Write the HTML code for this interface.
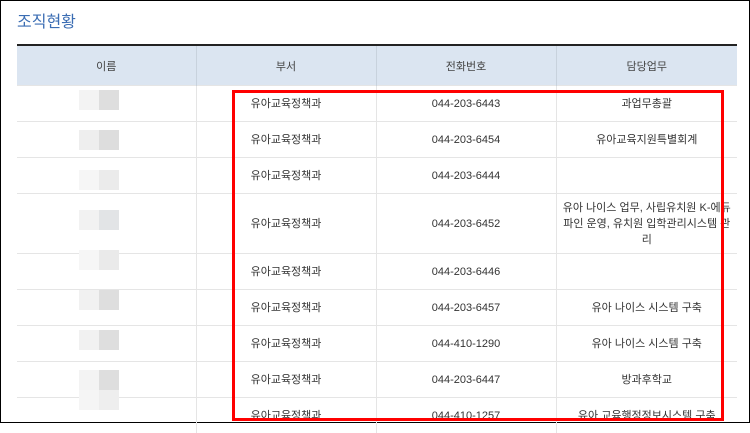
<!DOCTYPE html>
<html><head><meta charset="utf-8"><style>
body{margin:0;width:750px;height:423px;overflow:hidden;background:#fff;font-family:"Liberation Sans","Noto Sans CJK KR",sans-serif;position:relative}
.frame{position:absolute;left:0;top:0;width:748px;height:421px;border:1px solid #000;}
.title{position:absolute;left:17px;top:8px;font-size:16px;color:#3b6db3;}
table{position:absolute;left:17px;top:44px;width:720px;border-collapse:collapse;border-top:2px solid #222;font-size:11px;color:#333;table-layout:fixed}
th{background:#dbe5f1;height:37px;font-weight:normal;border-left:1px solid #c8d2dd;color:#444}
th:first-child,td:first-child{border-left:none}
td{text-align:center;border-top:1px solid #e5e5e5;border-left:1px solid #e5e5e5;height:35px;padding:0 4px;line-height:16px}
.b{position:absolute;width:20px;height:20px}
.red{position:absolute;left:232px;top:90px;width:486px;height:325px;border:3px solid #f00}
</style></head><body>
<div class="frame"></div>
<div class="title">조직현황</div>
<table>
<colgroup><col style="width:179px"><col style="width:180px"><col style="width:180px"><col style="width:181px"></colgroup>
<tr><th>이름</th><th>부서</th><th>전화번호</th><th>담당업무</th></tr>
<tr><td></td><td>유아교육정책과</td><td>044-203-6443</td><td>과업무총괄</td></tr>
<tr><td></td><td>유아교육정책과</td><td>044-203-6454</td><td>유아교육지원특별회계</td></tr>
<tr><td></td><td>유아교육정책과</td><td>044-203-6444</td><td></td></tr>
<tr><td style="height:59px"></td><td>유아교육정책과</td><td>044-203-6452</td><td>유아 나이스 업무, 사립유치원 K-에듀파인 운영, 유치원 입학관리시스템 관리</td></tr>
<tr><td></td><td>유아교육정책과</td><td>044-203-6446</td><td></td></tr>
<tr><td></td><td>유아교육정책과</td><td>044-203-6457</td><td>유아 나이스 시스템 구축</td></tr>
<tr><td></td><td>유아교육정책과</td><td>044-410-1290</td><td>유아 나이스 시스템 구축</td></tr>
<tr><td></td><td>유아교육정책과</td><td>044-203-6447</td><td>방과후학교</td></tr>
<tr><td></td><td>유아교육정책과</td><td>044-410-1257</td><td>유아 교육행정정보시스템 구축</td></tr>
</table>
<div class="b" style="left:79px;top:90px;background:#f3f3f3"></div><div class="b" style="left:99px;top:90px;background:#dedede"></div>
<div class="b" style="left:79px;top:130px;background:#eee"></div><div class="b" style="left:99px;top:130px;background:#ddd"></div>
<div class="b" style="left:79px;top:170px;background:#f6f6f6"></div><div class="b" style="left:99px;top:170px;background:#ebebeb"></div>
<div class="b" style="left:79px;top:210px;background:#f2f2f2"></div><div class="b" style="left:99px;top:210px;background:#e2e4e6"></div>
<div class="b" style="left:79px;top:250px;background:#f6f6f6"></div><div class="b" style="left:99px;top:250px;background:#eaeaea"></div>
<div class="b" style="left:79px;top:290px;background:#f1f1f1"></div><div class="b" style="left:99px;top:290px;background:#dedede"></div>
<div class="b" style="left:79px;top:330px;background:#f1f1f1"></div><div class="b" style="left:99px;top:330px;background:#dedede"></div>
<div class="b" style="left:79px;top:370px;background:#f3f3f3"></div><div class="b" style="left:99px;top:370px;background:#dedede"></div>
<div class="b" style="left:79px;top:390px;background:#f5f5f5"></div><div class="b" style="left:99px;top:390px;background:#eee"></div>
<div class="red"></div>
</body></html>
